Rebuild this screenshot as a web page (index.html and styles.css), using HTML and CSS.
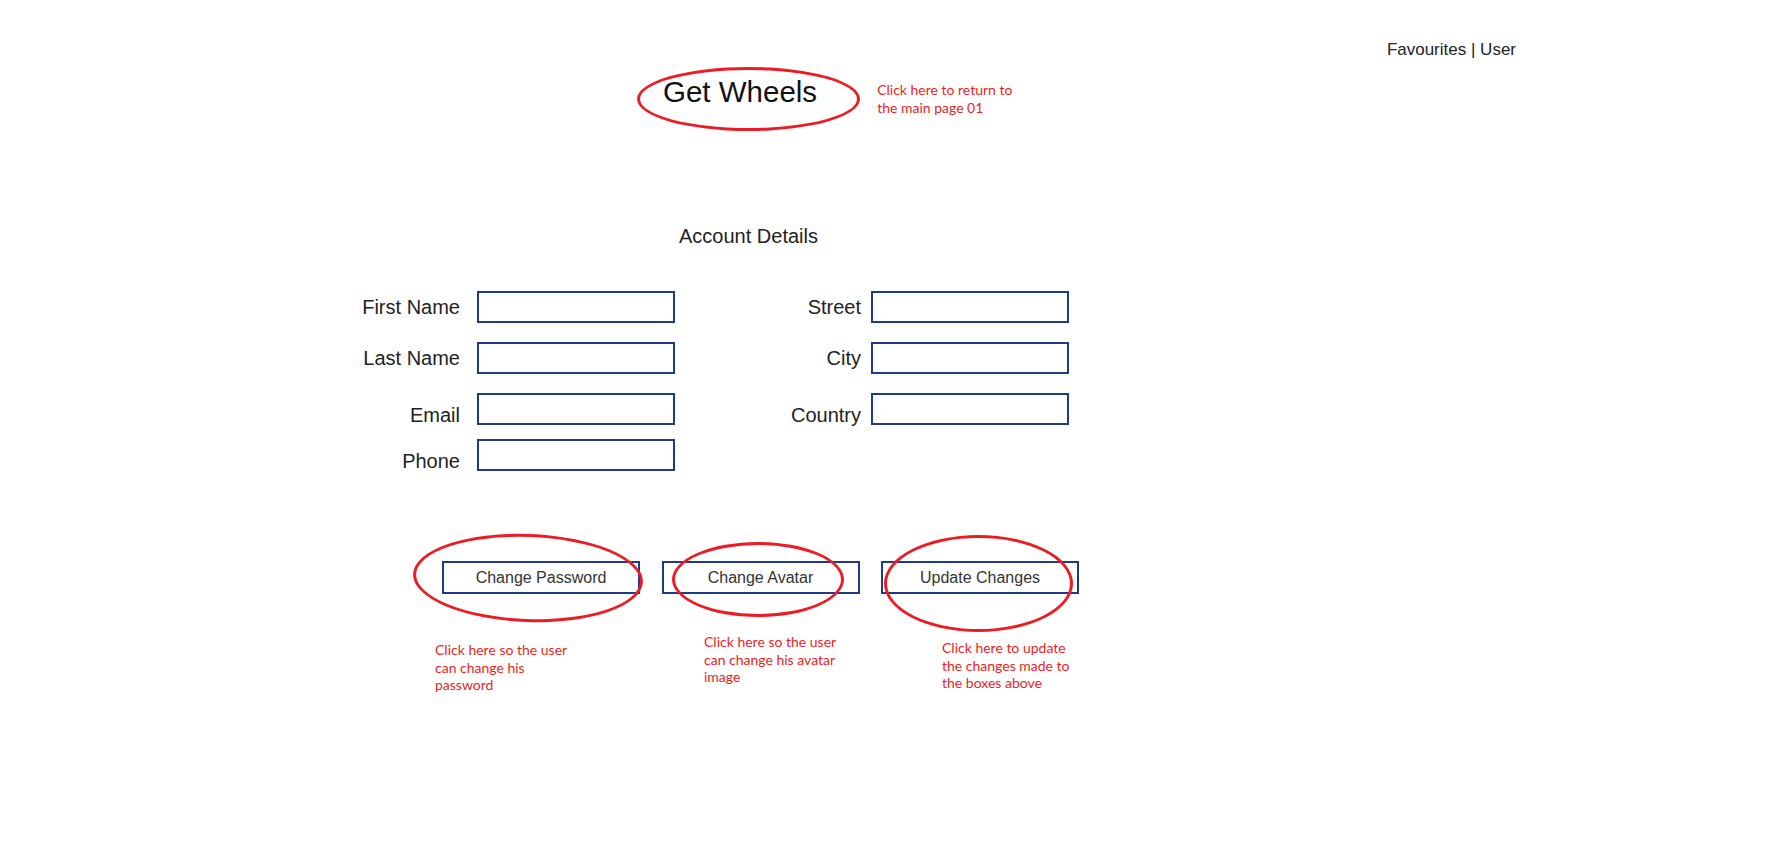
FILE: index.html
```html
<!DOCTYPE html>
<html lang="en">
<head>
<meta charset="utf-8">
<title>Get Wheels - Account Details</title>
<link rel="stylesheet" href="styles.css">
</head>
<body>
<header class="topbar">
  <nav class="top-links">Favourites | User</nav>
</header>

<div class="brand-row">
  <div class="brand">
    <h1 class="brand-title">Get Wheels</h1>
    <span class="ring ring-title"></span>
  </div>
  <p class="note note-brand">Click here to return to<br>the main page 01</p>
</div>

<main class="account">
  <h2 class="section-title">Account Details</h2>

  <div class="form">
    <div class="form-row">
      <div class="field field-left"><label class="field-label">First Name</label><input class="field-input" type="text"></div>
      <div class="field field-right"><label class="field-label">Street</label><input class="field-input" type="text"></div>
    </div>
    <div class="form-row">
      <div class="field field-left"><label class="field-label">Last Name</label><input class="field-input" type="text"></div>
      <div class="field field-right"><label class="field-label">City</label><input class="field-input" type="text"></div>
    </div>
    <div class="form-row">
      <div class="field field-left field-low"><label class="field-label">Email</label><input class="field-input" type="text"></div>
      <div class="field field-right field-low"><label class="field-label">Country</label><input class="field-input" type="text"></div>
    </div>
    <div class="form-row form-row-tight">
      <div class="field field-left field-low"><label class="field-label">Phone</label><input class="field-input" type="text"></div>
    </div>
  </div>

  <div class="actions">
    <div class="action">
      <button class="btn" type="button">Change Password</button>
      <span class="ring ring-password"></span>
    </div>
    <div class="action">
      <button class="btn" type="button">Change Avatar</button>
      <span class="ring ring-avatar"></span>
    </div>
    <div class="action">
      <button class="btn" type="button">Update Changes</button>
      <span class="ring ring-update"></span>
    </div>
  </div>

  <div class="notes">
    <p class="note note-password">Click here so the user<br>can change his<br>password</p>
    <p class="note note-avatar">Click here so the user<br>can change his avatar<br>image</p>
    <p class="note note-update">Click here to update<br>the changes made to<br>the boxes above</p>
  </div>
</main>
</body>
</html>
```
FILE: styles.css
```css
* {
  box-sizing: border-box;
}

html, body {
  margin: 0;
  padding: 0;
  background: #ffffff;
}

body {
  width: 1790px;
  min-height: 857px;
  font-family: "Liberation Sans", Arial, sans-serif;
  color: #222222;
}

/* top bar */
.topbar {
  display: flex;
  justify-content: flex-end;
  padding: 40px 274px 0 0;
}

.top-links {
  font-size: 17px;
  line-height: 20px;
  color: #222222;
}

/* brand */
.brand-row {
  display: flex;
  align-items: flex-start;
  height: 34px;
  margin-top: 15px;
  padding-left: 663px;
}

.brand {
  position: relative;
}

.brand-title {
  margin: 0;
  font-size: 29.5px;
  line-height: 34px;
  font-weight: normal;
  color: #111111;
}

.ring {
  position: absolute;
  border: 3px solid #ed1c24;
  border-radius: 50%;
  pointer-events: none;
}

.ring-title {
  left: -26px;
  top: -8px;
  width: 223px;
  height: 64px;
}

.note {
  margin: 0;
  font-family: Lato, "Open Sans", sans-serif;
  font-size: 14px;
  line-height: 17.5px;
  color: #f01c22;
}

.note-brand {
  margin-left: 60px;
  margin-top: 6px;
}

/* account section */
.account {
  display: flex;
  flex-direction: column;
}

.section-title {
  margin: 115px 0 0 679px;
  font-size: 20px;
  line-height: 24px;
  font-weight: normal;
  color: #222222;
}

.form {
  margin-top: 43px;
  padding-left: 340px;
  display: flex;
  flex-direction: column;
}

.form-row {
  display: flex;
  gap: 86px;
}

.form-row + .form-row {
  margin-top: 19px;
}

.form-row.form-row-tight {
  margin-top: 14px;
}

.field {
  display: flex;
  align-items: center;
  height: 32px;
}

.field-left {
  gap: 17px;
}

.field-left .field-label {
  width: 120px;
}

.field-right {
  gap: 10px;
}

.field-right .field-label {
  width: 100px;
}

.field-label {
  font-size: 20px;
  line-height: 24px;
  text-align: right;
  color: #222222;
}

.field-low .field-label {
  padding-top: 11px;
}

.field-input {
  width: 198px;
  height: 32px;
  margin: 0;
  padding: 0 6px;
  border: 2px solid #1f3a8a;
  border-radius: 0;
  background: #ffffff;
  font: inherit;
  outline: none;
}

/* buttons */
.actions {
  display: flex;
  gap: 21.5px;
  margin-top: 90px;
  padding-left: 442px;
}

.action {
  position: relative;
}

.btn {
  display: block;
  width: 198px;
  height: 33px;
  margin: 0;
  padding: 0;
  border: 2px solid #1f3a8a;
  border-radius: 0;
  background: #ffffff;
  font-family: "Liberation Sans", Arial, sans-serif;
  font-size: 16px;
  color: #333333;
  cursor: pointer;
}

.ring-password {
  left: -29px;
  top: -27px;
  width: 230px;
  height: 88px;
  transform: rotate(2deg);
}

.ring-avatar {
  left: 10px;
  top: -19px;
  width: 172px;
  height: 75px;
}

.ring-update {
  left: 3px;
  top: -26px;
  width: 189px;
  height: 97px;
}

/* notes */
.notes {
  display: flex;
  align-items: flex-start;
  margin-top: 39px;
  padding-left: 435px;
}

.note-password {
  width: 269px;
  margin-top: 8px;
}

.note-avatar {
  width: 238px;
}

.note-update {
  margin-top: 6px;
}
```
